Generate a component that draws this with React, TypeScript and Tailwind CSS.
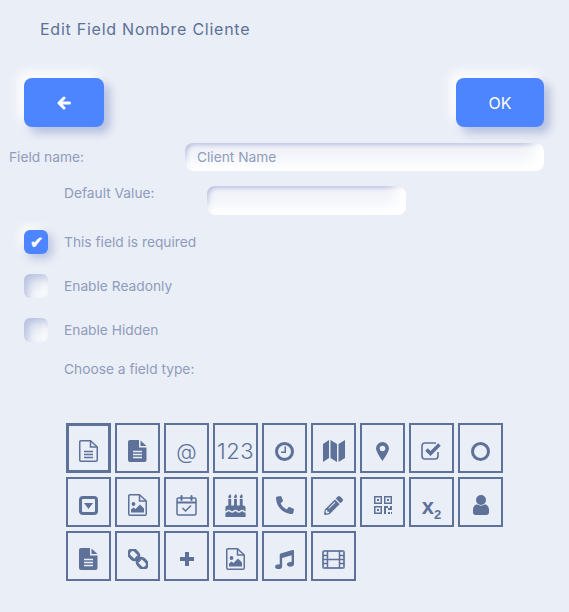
import { FaBirthdayCake, FaPhone, FaPencilAlt, FaMusic } from "react-icons/fa";
import type { ReactNode } from "react";

const C = "#5d7199";
const L = "#eaeef6";
const inputShadow = "bg-[#f1f3f9] shadow-[inset_-10px_-10px_14px_#ffffff,inset_2px_2px_4px_rgba(55,84,170,0.32)]";
const labelCls = "text-[13.75px] leading-4 text-[#8f9cbd]";

function Cell({ children, first }: { children: ReactNode; first?: boolean }) {
  return (
    <div className={`flex h-[50px] w-[45px] items-center justify-center border-[#5d7199] pt-[6px] text-[#5d7199] ${first ? "border-[3px]" : "border-2"}`}>
      {children}
    </div>
  );
}

function FileShape({ filled, children }: { filled?: boolean; children?: ReactNode }) {
  return (
    <svg width="19" height="22" viewBox="0 0 19 22" fill="none">
      {filled ? (
        <>
          <path d="M2 0H11V7.5H18.5V20a2 2 0 0 1-2 2H2a2 2 0 0 1-2-2V2a2 2 0 0 1 2-2z" fill={C} />
          <path d="M12.5 0.5L18.5 6H12.5z" fill={C} />
        </>
      ) : (
        <>
          <path d="M2 .75H11.5L18.25 7V20a1.25 1.25 0 0 1-1.25 1.25H2A1.25 1.25 0 0 1 .75 20V2A1.25 1.25 0 0 1 2 .75z" stroke={C} strokeWidth="1.5" />
          <path d="M11.5 1V7H18" stroke={C} strokeWidth="1.5" />
        </>
      )}
      {children}
    </svg>
  );
}

const FileLines = ({ color }: { color: string }) => (
  <path d="M5 11.5H14M5 14.5H14M5 17.5H14" stroke={color} strokeWidth="1.5" />
);

const FileImage = () => (
  <FileShape>
    <circle cx="5.5" cy="10" r="1.9" fill={C} />
    <path d="M3 18.5V15.5L5.5 13.5L7.5 15L12 10.5L16 14.5V18.5z" fill={C} />
  </FileShape>
);

function Check({ label, checked }: { label: string; checked?: boolean }) {
  return (
    <div className="flex h-6 items-center gap-4 pl-6">
      {checked ? (
        <div className="flex h-6 w-6 items-center justify-center rounded-md bg-[#4d84ff] text-[16px] font-bold leading-none text-white shadow-[4px_4px_10px_rgba(55,84,170,0.3),-4px_-4px_10px_#ffffff]">✔</div>
      ) : (
        <div className="h-6 w-6 rounded-md shadow-[inset_4px_4px_8px_rgba(55,84,170,0.3),inset_-4px_-4px_8px_#ffffff]" />
      )}
      <span className={labelCls}>{label}</span>
    </div>
  );
}

const btn = "flex h-[49px] items-center justify-center rounded-lg bg-[#4d84ff] text-white shadow-[6px_6px_10px_rgba(55,84,170,0.3),-6px_-6px_12px_#ffffff]";

export default function App() {
  return (
    <div className="h-[612px] w-[569px] overflow-hidden bg-[#eaeef6] font-['Inter','Liberation_Sans',sans-serif]">
      <h1 className="pl-10 pt-[20px] text-[16px] font-normal leading-[18px] tracking-[0.75px] text-[#5d7199]">Edit Field Nombre Cliente</h1>

      <div className="mt-[40px] flex justify-between pl-6 pr-[25px]">
        <button className={`${btn} w-20`}>
          <svg width="14" height="14" viewBox="0 0 14 14" fill="none">
            <path d="M7 2L2 7L7 12M2.5 7H12.5" stroke="#ffffff" strokeWidth="3" strokeLinecap="round" strokeLinejoin="round" />
          </svg>
        </button>
        <button className={`${btn} w-[88px] text-[16px]`}>OK</button>
      </div>

      <div className="mt-4 flex items-center pl-[9px] pr-[25px]">
        <span className={`${labelCls} w-[176px]`}>Field name:</span>
        <div className={`flex h-7 flex-1 items-center rounded-lg pl-3 pt-px text-[13.75px] text-[#8f9cbd] ${inputShadow}`}>Client Name</div>
      </div>

      <div className="mt-[15px] flex items-center pl-16">
        <span className={`${labelCls} w-[143px] -translate-y-2`}>Default Value:</span>
        <div className={`h-[29px] w-[199px] rounded-lg ${inputShadow}`} />
      </div>

      <div className="mt-[15px] flex flex-col gap-5">
        <Check label="This field is required" checked />
        <Check label="Enable Readonly" />
        <Check label="Enable Hidden" />
      </div>

      <p className={`${labelCls} mt-[19px] pl-16`}>Choose a field type:</p>

      <div className="ml-[66px] mt-[46px] grid w-[437px] grid-cols-[repeat(9,45px)] gap-1">
        <Cell first>
          <FileShape><FileLines color={C} /></FileShape>
        </Cell>
        <Cell>
          <FileShape filled><FileLines color={L} /></FileShape>
        </Cell>
        <Cell><span className="text-[21px] font-light leading-none">@</span></Cell>
        <Cell><span className="text-[22px] font-light leading-none tracking-[0.5px]">123</span></Cell>
        <Cell>
          <svg width="19" height="19" viewBox="0 0 19 19" fill="none">
            <circle cx="9.5" cy="9.5" r="8" stroke={C} strokeWidth="3" />
            <path d="M10.25 4.5V10.25H6" stroke={C} strokeWidth="1.5" />
          </svg>
        </Cell>
        <Cell>
          <svg width="22" height="22" viewBox="0 0 22 22" fill={C}>
            <path d="M0 4L6 0V18L0 22zM7.5 0L14 4V22L7.5 18zM15.5 4L22 0V18L15.5 22z" />
          </svg>
        </Cell>
        <Cell>
          <svg width="13" height="19" viewBox="0 0 13 19" fill={C}>
            <path fillRule="evenodd" d="M6.5 0A6.5 6.5 0 0 0 0 6.5C0 9 4 15.5 6.5 19C9 15.5 13 9 13 6.5A6.5 6.5 0 0 0 6.5 0zM6.5 3.7A2.8 2.8 0 1 1 6.5 9.3A2.8 2.8 0 0 1 6.5 3.7z" />
          </svg>
        </Cell>
        <Cell>
          <svg width="21" height="18" viewBox="0 0 21 18" fill="none">
            <path d="M17 10V14a3 3 0 0 1-3 3H4a3 3 0 0 1-3-3V4a3 3 0 0 1 3-3H15" stroke={C} strokeWidth="1.6" />
            <path d="M5.5 7.5L9.5 11.5L18.5 2.5" stroke={C} strokeWidth="3.6" />
          </svg>
        </Cell>
        <Cell>
          <svg width="19" height="19" viewBox="0 0 19 19" fill="none">
            <circle cx="9.5" cy="9.5" r="8" stroke={C} strokeWidth="3" />
          </svg>
        </Cell>

        <Cell>
          <svg width="19" height="19" viewBox="0 0 19 19" fill="none">
            <rect x="1.5" y="1.5" width="16" height="16" rx="2.5" stroke={C} strokeWidth="3" />
            <path d="M5 7H14L9.5 13z" fill={C} />
          </svg>
        </Cell>
        <Cell><FileImage /></Cell>
        <Cell>
          <svg width="21" height="21" viewBox="0 0 21 21" fill="none">
            <rect x="1" y="3" width="19" height="17" rx="1.5" stroke={C} strokeWidth="1.5" />
            <path d="M1 7.5H20" stroke={C} strokeWidth="2" />
            <path d="M5.5 1V5M15.5 1V5" stroke={C} strokeWidth="2" strokeLinecap="round" />
            <path d="M6.5 13L9.5 16L15 10.5" stroke={C} strokeWidth="1.5" />
          </svg>
        </Cell>
        <Cell><FaBirthdayCake size={23} /></Cell>
        <Cell><FaPhone size={18} className="-scale-x-100" /></Cell>
        <Cell><FaPencilAlt size={19} /></Cell>
        <Cell>
          <svg width="18" height="18" viewBox="0 0 18 18" fill="none">
            <rect x=".75" y=".75" width="6.5" height="6.5" stroke={C} strokeWidth="1.5" />
            <rect x="10.75" y=".75" width="6.5" height="6.5" stroke={C} strokeWidth="1.5" />
            <rect x=".75" y="10.75" width="6.5" height="6.5" stroke={C} strokeWidth="1.5" />
            <path d="M3 3H5V5H3zM13 3H15V5H13zM3 13H5V15H3zM10 10H14V12H16V10H18V14H14V12H12V18H10zM14 16H16V18H14zM17 16H18V18H17z" fill={C} />
          </svg>
        </Cell>
        <Cell>
          <span className="translate-y-[2px] font-['Liberation_Sans',sans-serif] text-[22px] font-bold leading-none">x<span className="relative top-[5px] text-[13px]">2</span></span>
        </Cell>
        <Cell>
          <svg width="16" height="20" viewBox="0 0 16 20" fill={C}>
            <circle cx="8" cy="5" r="5" />
            <path d="M4.5 9.5C6.5 11 9.5 11 11.5 9.5C14 9.5 16 11.5 16 15V17.5C16 19 15 20 13.5 20H2.5C1 20 0 19 0 17.5V15C0 11.5 2 9.5 4.5 9.5z" />
          </svg>
        </Cell>

        <Cell>
          <FileShape filled><FileLines color={L} /></FileShape>
        </Cell>
        <Cell>
          <svg width="20" height="20" viewBox="0 0 20 20" fill="none">
            <g stroke={C} strokeWidth="3" transform="rotate(45 10 10)">
              <rect x="-1.5" y="6" width="11" height="8" rx="4" />
              <rect x="10.5" y="6" width="11" height="8" rx="4" />
              <path d="M7 10H13" />
            </g>
          </svg>
        </Cell>
        <Cell>
          <svg width="14" height="14" viewBox="0 0 14 14" fill={C}>
            <path d="M5 0H9V5H14V9H9V14H5V9H0V5H5z" />
          </svg>
        </Cell>
        <Cell><FileImage /></Cell>
        <Cell><FaMusic size={19} /></Cell>
        <Cell>
          <svg width="23" height="19" viewBox="0 0 23 19" fill="none">
            <rect x="1" y="1" width="21" height="17" rx="1.5" stroke={C} strokeWidth="2" strokeOpacity="0.85" />
            <path d="M5.5 1V18M17.5 1V18M5.5 9.5H17.5" stroke={C} strokeWidth="1.5" />
            <path d="M1 5.5H5.5M1 9.5H5.5M1 13.5H5.5M17.5 5.5H22M17.5 9.5H22M17.5 13.5H22" stroke={C} strokeWidth="1.5" />
          </svg>
        </Cell>
      </div>
    </div>
  );
}
